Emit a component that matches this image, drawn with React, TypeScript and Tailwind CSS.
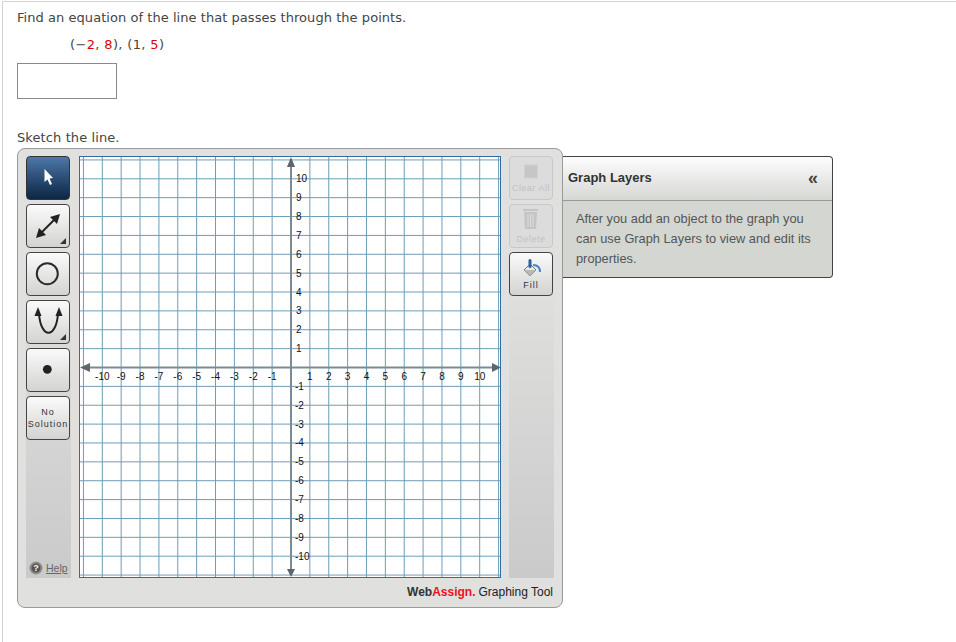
const UNIT = 18.87;
const CX = 291;
const CY = 367.5;
const ORIGIN_X = 79;
const ORIGIN_Y = 156;

const steps = Array.from({ length: 23 }, (_, i) => i - 11);
const labels = steps.filter((n) => n !== 0 && Math.abs(n) <= 10);

const GraphCanvas = () => {
	const x = (n: number) => CX - ORIGIN_X + n * UNIT;
	const y = (n: number) => CY - ORIGIN_Y - n * UNIT;

	return (
		<svg width="422" height="422" className="block shrink-0 bg-white">
			{/* grid */}
			{steps.map((n) => (
				<g key={n} stroke="#6d9db8" strokeWidth="1">
					{n !== 0 && <line x1={x(n)} y1="0" x2={x(n)} y2="422" />}
					{n !== 0 && <line x1="0" y1={y(n)} x2="422" y2={y(n)} />}
				</g>
			))}
			<rect x="0.5" y="0.5" width="421" height="421" fill="none" stroke="#2f6da3" />

			{/* axes */}
			<line x1="6" y1={y(0)} x2="416" y2={y(0)} stroke="#7b8b96" strokeWidth="2" />
			<line x1={x(0)} y1="6" x2={x(0)} y2="416" stroke="#7b8b96" strokeWidth="2" />
			<polygon points="1,211.5 11,207 11,216" fill="#5c666c" />
			<polygon points="422,211.5 413,207 413,216" fill="#5c666c" />
			<polygon points="212,1 208,11 216,11" fill="#5c666c" />
			<polygon points="212,421 208,413 216,413" fill="#5c666c" />

			{/* labels */}
			<g fontFamily="'Liberation Sans', Arial, sans-serif" fontSize="10" fill="#111">
				{labels.map((n) => (
					<text key={`x${n}`} x={x(n)} y="224" textAnchor="middle">
						{n}
					</text>
				))}
				{labels.map((n) => (
					<text key={`y${n}`} x={n > 0 ? 217 : 216} y={y(n) + 3.5}>
						{n}
					</text>
				))}
			</g>
		</svg>
	);
};

const ToolButton = ({
	children,
	active,
	disabled,
}: {
	children: React.ReactNode;
	active?: boolean;
	disabled?: boolean;
}) => {
	let look = "border-[#444] bg-gradient-to-b from-[#fafafa] to-[#d3d4d1]";
	if (active) look = "border-[#333] bg-gradient-to-b from-[#4d78a9] to-[#0d2646]";
	if (disabled) look = "border-[#c8c8c8] bg-[#dcdcdc]";
	return (
		<div
			className={`w-[44px] h-[44px] shrink-0 rounded-[4px] border flex flex-col items-center overflow-hidden ${look}`}
		>
			{children}
		</div>
	);
};

const Corner = () => <polygon points="39,33 39,39 33,39" fill="#333" />;

const Icon = ({ children }: { children: React.ReactNode }) => (
	<svg width="42" height="42" className="block">
		{children}
	</svg>
);

const App = () => {
	return (
		<div className="w-[956px] h-[642px] overflow-hidden bg-white pt-px font-['DejaVu_Sans',Verdana,sans-serif]">
			<div className="h-full ml-[2px] border-t border-l border-[#d4d4d4] pl-[14px]">
				{/* question */}
				<p className="h-[30px] pt-[8px] text-[13px] leading-[16px] text-[#444] tracking-[0.05px]">
					Find an equation of the line that passes through the points.
				</p>
				<p className="ml-[53px] h-[31px] pt-[5px] text-[13px] leading-[16px] text-[#444] tracking-[0.35px]">
					(−<span className="text-[#e00000]">2</span>, <span className="text-[#e00000]">8</span>), (1,{" "}
					<span className="text-[#e00000]">5</span>)
				</p>
				<input
					type="text"
					className="block w-[100px] h-[36px] border border-[#8a8a8a] bg-white"
				/>
				<p className="h-[49px] pt-[31px] text-[13px] leading-[16px] text-[#444] tracking-[0.1px]">
					Sketch the line.
				</p>

				<div className="flex items-start">
					{/* graphing tool */}
					<div className="w-[546px] h-[460px] shrink-0 rounded-[8px] border border-[#999] bg-[#e0e0df] pt-[7px] px-[8px] font-['Liberation_Sans',Arial,sans-serif]">
						<div className="flex gap-2 h-[422px]">
							{/* left tools */}
							<div className="w-[45px] shrink-0 flex flex-col gap-1 bg-gradient-to-b from-[#e0e0df] from-30% to-[#cacaca] relative">
								<ToolButton active>
									<Icon>
										<polygon
											points="17.5,12 17.5,25 20.5,22.5 23,28 25,27 22.5,21.5 26,21"
											fill="#fff"
										/>
									</Icon>
								</ToolButton>
								<ToolButton>
									<Icon>
										<line x1="13" y1="29" x2="29" y2="13" stroke="#222" strokeWidth="2" />
										<polygon points="9,33 12,23 19,30" fill="#222" />
										<polygon points="33,9 23,12 30,19" fill="#222" />
										<Corner />
									</Icon>
								</ToolButton>
								<ToolButton>
									<Icon>
										<circle cx="20.3" cy="20.7" r="10.5" fill="none" stroke="#2b2b2b" strokeWidth="2" />
									</Icon>
								</ToolButton>
								<ToolButton>
									<Icon>
										<path d="M12 13 C14 38 29 38 31 13" fill="none" stroke="#222" strokeWidth="2" />
										<polygon points="11,6 7.5,15 14.5,15" fill="#222" />
										<polygon points="32,6 28.5,15 35.5,15" fill="#222" />
										<Corner />
									</Icon>
								</ToolButton>
								<ToolButton>
									<Icon>
										<circle cx="20.3" cy="20.3" r="4.4" fill="#222" />
									</Icon>
								</ToolButton>
								<ToolButton>
									<div className="pt-[9px] flex flex-col items-center text-[9px] leading-[12px] tracking-[1px] text-[#333]">
										<span>No</span>
										<span>Solution</span>
									</div>
								</ToolButton>
								<div className="absolute left-[3px] bottom-[3px] flex items-center gap-[3px]">
									<svg width="14" height="14" className="block">
										<circle cx="7" cy="7" r="6.5" fill="#8d8d8d" />
										<circle cx="7" cy="7" r="4.5" fill="#555" />
										<text
											x="7"
											y="10"
											textAnchor="middle"
											fontSize="9"
											fontWeight="bold"
											fill="#fff"
											fontFamily="'Liberation Sans', Arial, sans-serif"
										>
											?
										</text>
									</svg>
									<a href="#" className="text-[10.5px] leading-[14px] text-[#666] underline">
										Help
									</a>
								</div>
							</div>

							<GraphCanvas />

							{/* right tools */}
							<div className="w-[45px] shrink-0 flex flex-col gap-1 bg-gradient-to-b from-[#e0e0df] from-30% to-[#cacaca]">
								<ToolButton disabled>
									<svg width="42" height="25" className="block shrink-0">
										<rect x="14.5" y="8" width="13" height="13" fill="#c6c6c6" stroke="#d0d0d0" />
									</svg>
									<span className="text-[9px] leading-[12px] tracking-[0.5px] whitespace-nowrap text-[#c2c2c2]">
										Clear All
									</span>
								</ToolButton>
								<ToolButton disabled>
									<svg width="42" height="28" className="block shrink-0">
										<rect x="13" y="4" width="15" height="2" fill="#c4c4c4" />
										<path d="M14 7 H27 L26 24 H15 Z" fill="#c4c4c4" />
										<path d="M18 9 V22 M20.5 9 V22 M23 9 V22" stroke="#dcdcdc" />
									</svg>
									<span className="text-[9px] leading-[12px] tracking-[0.5px] whitespace-nowrap text-[#c2c2c2]">
										Delete
									</span>
								</ToolButton>
								<ToolButton>
									<svg width="42" height="26" className="block shrink-0">
										<polygon points="20,11 26,17 20,23 14,17" fill="#e8e8e8" stroke="#777" />
										<polygon points="14,17 26,17 20,23" fill="#b9b9b9" />
										<rect x="18.5" y="6" width="3" height="9" rx="1.5" fill="#2b5fa8" />
										<path d="M23 12 C28 12 30 14 30 19" fill="none" stroke="#4a86c8" strokeWidth="2" />
									</svg>
									<span className="text-[9px] leading-[12px] tracking-[1px] text-[#333]">Fill</span>
								</ToolButton>
							</div>
						</div>

						{/* brand */}
						<div className="h-[29px] pb-[2px] flex items-center justify-end pr-px text-[12px] leading-[14px] whitespace-nowrap">
							<span className="font-bold text-[#333]">Web</span>
							<span className="font-bold text-[#ee1122]">Assign.</span>
							<span className="ml-[3px] text-[#222]">Graphing Tool</span>
						</div>
					</div>

					{/* graph layers flyout */}
					<div className="w-[270px] h-[122px] mt-[8px] shrink-0 rounded-r-[4px] border border-l-0 border-[#444] bg-[#d4d6d2] font-['Liberation_Sans',Arial,sans-serif]">
						<div className="h-[44px] pb-[2px] flex items-center justify-between pl-[5px] pr-[14px] border-b border-[#999] rounded-tr-[4px] bg-gradient-to-b from-[#fdfdfd] to-[#d6d8d4]">
							<span className="text-[13px] font-bold text-[#333]">Graph Layers</span>
							<span className="text-[18px] leading-[20px] font-bold text-[#444]">«</span>
						</div>
						<p className="pl-[13px] pt-[8px] text-[12.8px] leading-[20px] text-[#555]">
							After you add an object to the graph you
							<br />
							can use Graph Layers to view and edit its
							<br />
							properties.
						</p>
					</div>
				</div>
			</div>
		</div>
	);
};

export default App;
